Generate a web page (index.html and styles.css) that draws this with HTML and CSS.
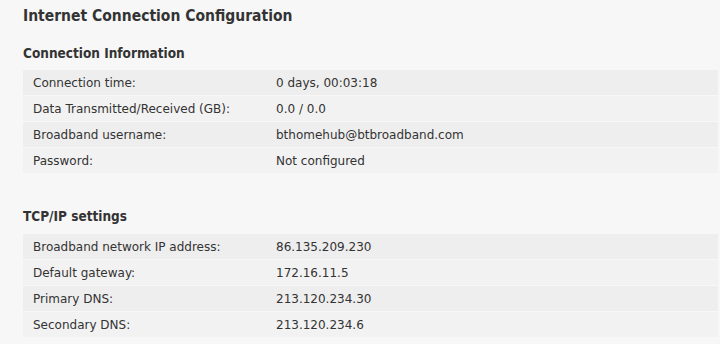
FILE: index.html
```html
<!DOCTYPE html>
<html>
<head>
<meta charset="utf-8">
<link rel="stylesheet" href="styles.css">
</head>
<body>
<div class="page">
  <h1 class="title">Internet Connection Configuration</h1>
  <h2 class="section">Connection Information</h2>
  <div class="table">
    <div class="row odd"><span class="label">Connection time:</span><span class="value">0 days, 00:03:18</span></div>
    <div class="row even"><span class="label">Data Transmitted/Received (GB):</span><span class="value">0.0 / 0.0</span></div>
    <div class="row odd"><span class="label">Broadband username:</span><span class="value">bthomehub@btbroadband.com</span></div>
    <div class="row even"><span class="label">Password:</span><span class="value">Not configured</span></div>
  </div>
  <h2 class="section second">TCP/IP settings</h2>
  <div class="table">
    <div class="row odd"><span class="label">Broadband network IP address:</span><span class="value">86.135.209.230</span></div>
    <div class="row even"><span class="label">Default gateway:</span><span class="value">172.16.11.5</span></div>
    <div class="row odd"><span class="label">Primary DNS:</span><span class="value">213.120.234.30</span></div>
    <div class="row even"><span class="label">Secondary DNS:</span><span class="value">213.120.234.6</span></div>
  </div>
</div>
</body>
</html>
```
FILE: styles.css
```css
html, body {
  margin: 0;
  background: #f7f7f7;
}
.page {
  padding: 5px 2px 0 23px;
  font-family: "DejaVu Sans", sans-serif;
  color: #333;
}
.title {
  margin: 0;
  font-family: "DejaVu Sans Condensed", "DejaVu Sans", sans-serif;
  font-size: 15.5px;
  line-height: 22px;
  font-weight: bold;
  color: #333;
}
.section {
  margin: 17px 0 0;
  font-family: "DejaVu Sans Condensed", "DejaVu Sans", sans-serif;
  font-size: 13.5px;
  line-height: 18px;
  font-weight: bold;
  color: #333;
}
.section.second {
  margin-top: 34px;
  line-height: 19px;
}
.table {
  margin-top: 8px;
  display: flex;
  flex-direction: column;
  gap: 1px;
}
.row {
  display: flex;
  height: 25px;
  align-items: center;
  font-size: 12px;
}
.row.odd { background: #eeeeee; }
.row.even { background: #f2f2f2; }
.label {
  width: 243px;
  padding-left: 10px;
}
```
